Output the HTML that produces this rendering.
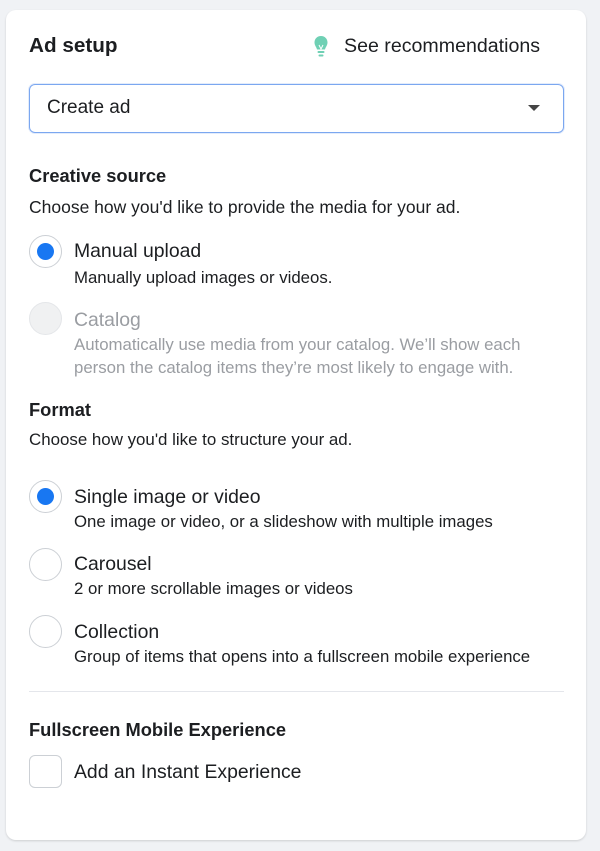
<!DOCTYPE html>
<html><head><meta charset="utf-8"><style>
*{margin:0;padding:0;box-sizing:border-box}
body{width:600px;height:851px;background:#f0f2f5;font-family:"Liberation Sans",Arial,sans-serif;color:#1c1e21;position:relative;overflow:hidden}
.card{position:absolute;left:6px;top:10px;width:580px;height:830px;background:#fff;border-radius:10px;box-shadow:0 1px 2px rgba(0,0,0,.15)}
.t{position:absolute;white-space:nowrap;line-height:24px}
.h{font-weight:bold;font-size:18.3px}
.p{font-size:16.9px;color:#1c1e21}
.l{font-size:19.4px}
.s{font-size:16.8px}
.g{color:#9a9da2}
.r{position:absolute;left:29px;width:33px;height:33px;border-radius:50%;border:1px solid #ccd0d5;background:#fff}
.r.on::after{content:"";position:absolute;left:7px;top:7px;width:17px;height:17px;border-radius:50%;background:#1877f2}
</style></head><body>
<div class="card"></div>
<div class="t" style="left:29px;top:33px;font-weight:bold;font-size:20.7px;line-height:26px">Ad setup</div>
<svg style="position:absolute;left:313px;top:35px" width="16" height="24" viewBox="0 0 16 24"><path d="M8 1C4 1 1.5 4 1.5 7.5c0 3 2 4.5 2.5 7h8c.5-2.5 2.5-4 2.5-7C14.5 4 12 1 8 1z" fill="#6fd0b4"/><path d="M6 10l2 4 2-4" stroke="#fff" stroke-width="1" fill="none"/><rect x="4.5" y="16" width="7" height="2" rx="1" fill="#6fd0b4"/><rect x="5.5" y="19.5" width="5" height="2" rx="1" fill="#6fd0b4"/></svg>
<div class="t" style="left:344px;top:34px;font-size:19.6px">See recommendations</div>
<div style="position:absolute;left:29px;top:84px;width:535px;height:49px;border:1.5px solid #7ba7f0;border-radius:6px;box-shadow:0 0 0 1px #e3ecfb"></div>
<div class="t" style="left:47px;top:96px;font-size:19px">Create ad</div>
<div style="position:absolute;left:528px;top:105px;width:0;height:0;border-left:6px solid transparent;border-right:6px solid transparent;border-top:6px solid #444"></div>
<div class="t h" style="left:29px;top:164px">Creative source</div>
<div class="t p" style="left:29px;top:195px;font-size:17.5px">Choose how you'd like to provide the media for your ad.</div>
<div class="r on" style="top:235px"></div>
<div class="t l" style="left:74px;top:239px">Manual upload</div>
<div class="t s" style="left:74px;top:266px">Manually upload images or videos.</div>
<div class="r" style="top:302px;background:#f0f1f2;border-color:#e4e6e9"></div>
<div class="t l g" style="left:74px;top:308px">Catalog</div>
<div class="t s g" style="left:74px;top:333px">Automatically use media from your catalog. We’ll show each</div>
<div class="t s g" style="left:74px;top:356px">person the catalog items they’re most likely to engage with.</div>
<div class="t h" style="left:29px;top:398px">Format</div>
<div class="t p" style="left:29px;top:428px">Choose how you'd like to structure your ad.</div>
<div class="r on" style="top:480px"></div>
<div class="t l" style="left:74px;top:485px">Single image or video</div>
<div class="t s" style="left:74px;top:510px">One image or video, or a slideshow with multiple images</div>
<div class="r" style="top:548px"></div>
<div class="t l" style="left:74px;top:552px">Carousel</div>
<div class="t s" style="left:74px;top:577px">2 or more scrollable images or videos</div>
<div class="r" style="top:615px"></div>
<div class="t l" style="left:74px;top:620px">Collection</div>
<div class="t s" style="left:74px;top:645px">Group of items that opens into a fullscreen mobile experience</div>
<div style="position:absolute;left:29px;top:691px;width:535px;height:1px;background:#e4e6eb"></div>
<div class="t h" style="left:29px;top:718px">Fullscreen Mobile Experience</div>
<div style="position:absolute;left:29px;top:755px;width:33px;height:33px;border:1px solid #ccd0d5;border-radius:6px"></div>
<div class="t l" style="left:74px;top:760px">Add an Instant Experience</div>
</body></html>
